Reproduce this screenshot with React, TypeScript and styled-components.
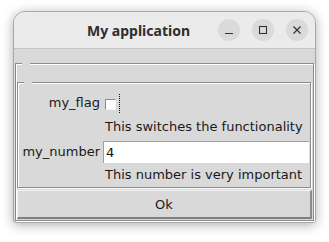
import React from 'react';
import styled, {createGlobalStyle} from "styled-components";

const GlobalStyle = createGlobalStyle`
  html, body {
    margin: 0;
    padding: 0;
    background: #ffffff;
  }
`

export default function App() {
    return (
        <StyledDesktop>
            <GlobalStyle/>
            <StyledWindow>
                <StyledTitleBar>
                    <StyledTitle>My application</StyledTitle>
                    <StyledTitleButtons>
                        <StyledTitleButton>
                            <svg width="10" height="10" viewBox="0 0 10 10">
                                <line x1="1" y1="8.5" x2="9" y2="8.5" stroke="#333" strokeWidth="1.2"/>
                            </svg>
                        </StyledTitleButton>
                        <StyledTitleButton>
                            <svg width="10" height="10" viewBox="0 0 10 10">
                                <rect x="1.5" y="1.5" width="7" height="7" fill="none" stroke="#333" strokeWidth="1.1"/>
                            </svg>
                        </StyledTitleButton>
                        <StyledTitleButton>
                            <svg width="10" height="10" viewBox="0 0 10 10">
                                <path d="M1.5 1.5 L8.5 8.5 M8.5 1.5 L1.5 8.5" stroke="#333" strokeWidth="1.2"/>
                            </svg>
                        </StyledTitleButton>
                    </StyledTitleButtons>
                </StyledTitleBar>
                <StyledBody>
                    <StyledTopBand/>
                    <StyledOuterFrame>
                        <StyledInnerFrame>
                            <StyledLabel>my_flag</StyledLabel>
                            <StyledCheckCell>
                                <StyledCheckBox/>
                                <StyledFocusLine/>
                            </StyledCheckCell>
                            <span/>
                            <StyledHelp $height={26}>This switches the functionality</StyledHelp>
                            <StyledLabel>my_number</StyledLabel>
                            <StyledEntry defaultValue="4"/>
                            <span/>
                            <StyledHelp $height={24}>This number is very important</StyledHelp>
                        </StyledInnerFrame>
                        <StyledButton>Ok</StyledButton>
                    </StyledOuterFrame>
                </StyledBody>
            </StyledWindow>
        </StyledDesktop>
    );
}

const StyledDesktop = styled.div`
  width: 329px;
  height: 242px;
  padding: 11px 0 0 13px;
  box-sizing: border-box;
  background: #ffffff;
`
const StyledWindow = styled.div`
  width: 303px;
  height: 212px;
  box-sizing: border-box;
  border: 1px solid #a9a9a9;
  border-radius: 12px 12px 3px 3px;
  overflow: hidden;
  display: flex;
  flex-direction: column;
  background: #d9d9d9;
  box-shadow: 0 2px 12px rgba(0, 0, 0, 0.32);
`
const StyledTitleBar = styled.div`
  height: 37px;
  flex: none;
  box-sizing: border-box;
  border-bottom: 1px solid #c4c4c4;
  background: #ebebeb;
  position: relative;
  display: flex;
  align-items: center;
`
const StyledTitle = styled.span`
  position: absolute;
  left: 0;
  right: 0;
  top: 9px;
  text-align: center;
  padding-right: 52px;
  font-family: "Noto Sans", "DejaVu Sans", sans-serif;
  font-weight: 700;
  font-size: 14px;
  color: #2e2e2e;
`
const StyledTitleButtons = styled.div`
  margin-left: auto;
  margin-right: 7px;
  display: flex;
  gap: 12px;
  position: relative;
`
const StyledTitleButton = styled.span`
  width: 22px;
  height: 22px;
  border-radius: 50%;
  background: #dadada;
  display: flex;
  align-items: center;
  justify-content: center;
`
const StyledBody = styled.div`
  flex: 1;
  display: flex;
  flex-direction: column;
  padding: 0 1px 1px 1px;
  font-family: "DejaVu Sans", sans-serif;
  font-size: 13px;
  color: #1a1a1a;
`
const StyledTopBand = styled.div`
  height: 14px;
  flex: none;
`
const StyledOuterFrame = styled.div`
  flex: 1;
  display: flex;
  flex-direction: column;
  box-sizing: border-box;
  border: 1px solid #8c8c8c;
  box-shadow: inset 1px 1px 0 #ffffff, 1px 1px 0 #ffffff;
  padding: 18px 1px 0 1px;
  position: relative;

  &:before {
    content: "";
    position: absolute;
    top: -1px;
    left: 6px;
    width: 8px;
    height: 2px;
    background: #d9d9d9;
  }
`
const StyledInnerFrame = styled.div`
  display: grid;
  grid-template-columns: 81px 1fr;
  grid-auto-rows: auto;
  column-gap: 3px;
  align-items: center;
  box-sizing: border-box;
  height: 106px;
  border: 1px solid #8c8c8c;
  box-shadow: inset 1px 1px 0 #ffffff, 1px 1px 0 #ffffff;
  padding: 9px 1px 0 1px;
  margin-right: 1px;
  position: relative;

  &:before {
    content: "";
    position: absolute;
    top: -1px;
    left: 6px;
    width: 8px;
    height: 2px;
    background: #d9d9d9;
  }
`
const StyledLabel = styled.span`
  text-align: right;
  height: 22px;
  line-height: 22px;
  white-space: nowrap;
`
const StyledCheckCell = styled.span`
  height: 22px;
  display: flex;
  align-items: center;
  gap: 3px;
  padding-left: 2px;
`
const StyledCheckBox = styled.span`
  width: 11px;
  height: 11px;
  box-sizing: border-box;
  background: #ffffff;
  border-top: 1px solid #8a8a8a;
  border-left: 1px solid #8a8a8a;
  border-right: 1px solid #f4f4f4;
  border-bottom: 1px solid #f4f4f4;
  margin-top: 3px;
`
const StyledFocusLine = styled.span`
  width: 0;
  height: 19px;
  border-left: 1px dotted #111111;
`
const StyledHelp = styled.span<{ $height: number }>`
  height: ${props => props.$height}px;
  line-height: ${props => props.$height}px;
  padding-left: 2px;
  white-space: nowrap;
`
const StyledEntry = styled.input`
  height: 22px;
  box-sizing: border-box;
  margin: 0;
  width: 100%;
  border: none;
  border-top: 1px solid #a0a0a0;
  border-left: 1px solid #a0a0a0;
  background: #ffffff;
  outline: none;
  padding: 0 0 0 2px;
  font-family: "DejaVu Sans", sans-serif;
  font-size: 13px;
  color: #111111;
`
const StyledButton = styled.button`
  margin: 2px 0 0 0;
  height: 29px;
  box-sizing: border-box;
  background: #d9d9d9;
  border: none;
  border-top: 1px solid #f4f4f4;
  border-left: 1px solid #f4f4f4;
  border-right: 2px solid #8c8c8c;
  border-bottom: 2px solid #7f7f7f;
  font-family: "DejaVu Sans", sans-serif;
  font-size: 13px;
  color: #1a1a1a;
  padding: 0;
`
